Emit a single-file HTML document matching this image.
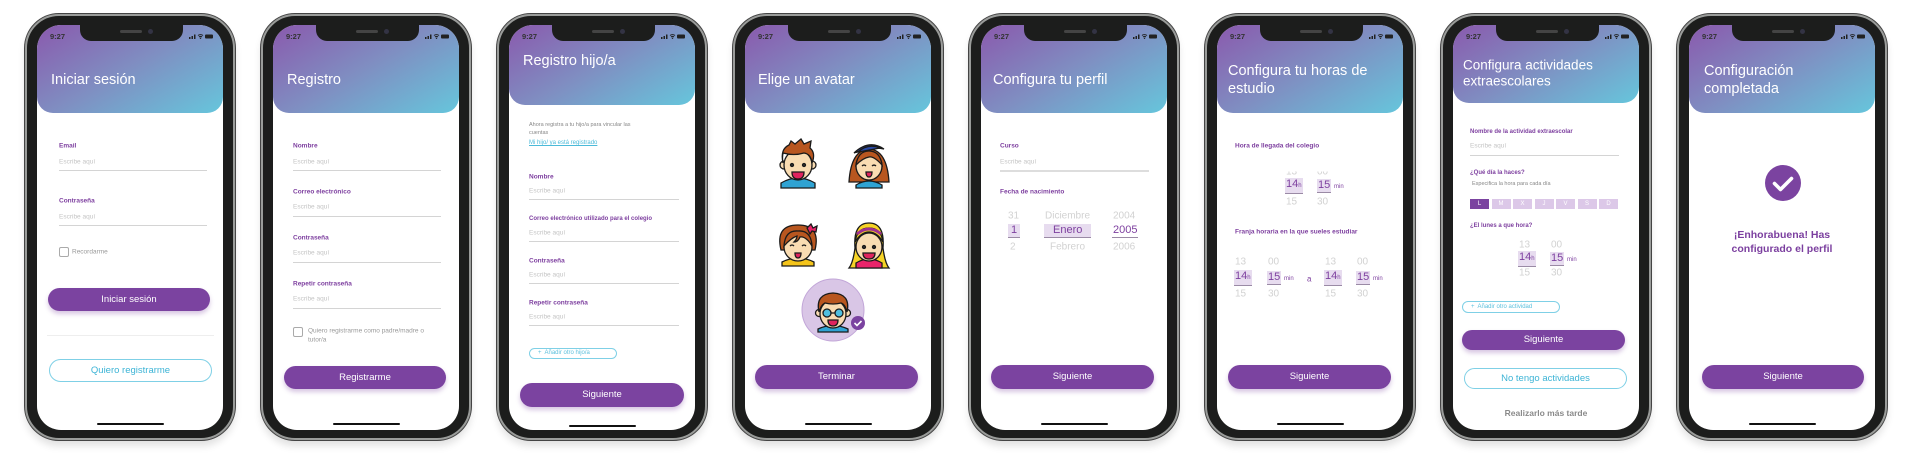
<!DOCTYPE html>
<html><head><meta charset="utf-8">
<style>
*{margin:0;padding:0;box-sizing:border-box}
body{width:1911px;height:464px;background:#fff;position:relative;overflow:hidden;font-family:"Liberation Sans",sans-serif}
.ph{position:absolute;top:0;width:222px;height:464px}
.fr{position:absolute;left:5px;top:14px;width:210px;height:426px;border-radius:34px;background:#1c1d1c;border:2px solid #9a9c9a;box-shadow:0 0 0 1px #444,0 6px 8px rgba(0,0,0,.12)}
.btn-s{position:absolute;width:3px;background:#555;left:2px}
.sc{position:absolute;left:17px;top:25px;width:186px;height:405px;border-radius:24px;background:#fff;overflow:hidden}
.hd{position:absolute;left:0;top:0;width:186px;height:88px;border-radius:0 0 16px 16px;background:linear-gradient(150deg,#8a59ad 0%,#7f8fc2 50%,#66c6dc 100%)}
.notch{position:absolute;left:43px;top:0;width:103px;height:16px;background:#1c1d1c;border-radius:0 0 11px 11px}
.notch:before{content:"";position:absolute;left:40px;top:5px;width:22px;height:3px;border-radius:2px;background:#444}
.notch:after{content:"";position:absolute;left:68px;top:4px;width:5px;height:5px;border-radius:50%;background:#334}
.tm{position:absolute;left:13px;top:7px;font-size:7.5px;font-weight:bold;color:#333}
.st{position:absolute;right:10px;top:8px;width:24px;height:6px}
.t{position:absolute;transform:translateY(-50%);white-space:nowrap}
.ttl{color:#fff;font-size:14.5px;left:14px}
.lb{font-size:6.5px;color:#7d3f9f;font-weight:bold}
.pl{font-size:6.5px;color:#c4c4c4}
.ln{position:absolute;height:1px;background:#d4d4d4}
.bt{position:absolute;height:23px;border-radius:12px;background:#7b43a0;color:#fff;font-size:9.5px;text-align:center;line-height:23px;box-shadow:0 3px 5px rgba(123,67,160,.3)}
.ob{position:absolute;height:23px;border-radius:12px;border:1px solid #7fd0e6;color:#3db4d6;font-size:9.5px;text-align:center;line-height:21px}
.hm{position:absolute;left:60px;top:398px;width:67px;height:2px;background:#111;border-radius:1px}
.cb{position:absolute;width:10px;height:10px;border:1px solid #aaa;border-radius:2px}
.gy{font-size:6.5px;color:#999}
.pk{font-size:10px;color:#d2d2d2}
.pks{font-size:11px;color:#7d3f9f;background:#e7dcef;border-bottom:1.5px solid #9a8aa5;padding:0 1px;line-height:13px}
.mn{font-size:6px;color:#7d3f9f}
.pill{position:absolute;height:11px;border:1px solid #7fd0e6;border-radius:6px;color:#5cc0dd;font-size:6px;line-height:9px;padding-left:8px}
.day{position:absolute;top:174px;width:19px;height:10px;background:#dcc8e8;color:#fff;font-size:6px;text-align:center;line-height:10px}
</style></head><body>

<!-- template repeated -->
<!-- PHONE 1 -->
<div class="ph" style="left:20px">
<div class="fr"></div>
<div class="sc">
 <div class="hd"></div><div class="notch"></div><div class="tm">9:27</div>
 <svg class="st" viewBox="0 0 24 6"><rect x="0" y="4" width="1.5" height="2" fill="#222"/><rect x="2.5" y="3" width="1.5" height="3" fill="#222"/><rect x="5" y="1.5" width="1.5" height="4.5" fill="#222"/><path d="M9 2.5a4 4 0 0 1 5 0M10 4a2.5 2.5 0 0 1 3 0" stroke="#222" stroke-width="1" fill="none"/><circle cx="11.5" cy="5.3" r=".7" fill="#222"/><rect x="16" y="1.5" width="8" height="4" rx="1" fill="#222"/></svg>
 <div class="t ttl" style="top:55px">Iniciar sesión</div>
 <div class="t lb" style="left:22px;top:121px">Email</div>
 <div class="t pl" style="left:22px;top:137px">Escribe aquí</div>
 <div class="ln" style="left:22px;top:145px;width:148px"></div>
 <div class="t lb" style="left:22px;top:176px">Contraseña</div>
 <div class="t pl" style="left:22px;top:192px">Escribe aquí</div>
 <div class="ln" style="left:22px;top:200px;width:148px"></div>
 <div class="cb" style="left:22px;top:222px"></div>
 <div class="t gy" style="left:35px;top:227px">Recordarme</div>
 <div class="bt" style="left:11px;top:263px;width:162px">Iniciar sesión</div>
 <div class="ln" style="left:10px;top:310px;width:167px;background:#eee"></div>
 <div class="ob" style="left:12px;top:334px;width:163px">Quiero registrarme</div>
 <div class="hm"></div>
</div></div>

<!-- PHONE 2 -->
<div class="ph" style="left:256px">
<div class="fr"></div>
<div class="sc">
 <div class="hd"></div><div class="notch"></div><div class="tm">9:27</div>
 <svg class="st" viewBox="0 0 24 6"><rect x="0" y="4" width="1.5" height="2" fill="#222"/><rect x="2.5" y="3" width="1.5" height="3" fill="#222"/><rect x="5" y="1.5" width="1.5" height="4.5" fill="#222"/><path d="M9 2.5a4 4 0 0 1 5 0M10 4a2.5 2.5 0 0 1 3 0" stroke="#222" stroke-width="1" fill="none"/><circle cx="11.5" cy="5.3" r=".7" fill="#222"/><rect x="16" y="1.5" width="8" height="4" rx="1" fill="#222"/></svg>
 <div class="t ttl" style="top:55px">Registro</div>
 <div class="t lb" style="left:20px;top:121px">Nombre</div>
 <div class="t pl" style="left:20px;top:137px">Escribe aquí</div>
 <div class="ln" style="left:20px;top:145px;width:148px"></div>
 <div class="t lb" style="left:20px;top:167px">Correo electrónico</div>
 <div class="t pl" style="left:20px;top:182px">Escribe aquí</div>
 <div class="ln" style="left:20px;top:191px;width:148px"></div>
 <div class="t lb" style="left:20px;top:213px">Contraseña</div>
 <div class="t pl" style="left:20px;top:228px">Escribe aquí</div>
 <div class="ln" style="left:20px;top:237px;width:148px"></div>
 <div class="t lb" style="left:20px;top:259px">Repetir contraseña</div>
 <div class="t pl" style="left:20px;top:274px">Escribe aquí</div>
 <div class="ln" style="left:20px;top:283px;width:148px"></div>
 <div class="cb" style="left:20px;top:302px"></div>
 <div class="t gy" style="left:35px;top:306px">Quiero registrarme como padre/madre o</div>
 <div class="t gy" style="left:35px;top:315px">tutor/a</div>
 <div class="bt" style="left:11px;top:341px;width:162px">Registrarme</div>
 <div class="hm"></div>
</div></div>

<!-- PHONE 3 -->
<div class="ph" style="left:492px">
<div class="fr"></div>
<div class="sc">
 <div class="hd" style="height:80px"></div><div class="notch"></div><div class="tm">9:27</div>
 <svg class="st" viewBox="0 0 24 6"><rect x="0" y="4" width="1.5" height="2" fill="#222"/><rect x="2.5" y="3" width="1.5" height="3" fill="#222"/><rect x="5" y="1.5" width="1.5" height="4.5" fill="#222"/><path d="M9 2.5a4 4 0 0 1 5 0M10 4a2.5 2.5 0 0 1 3 0" stroke="#222" stroke-width="1" fill="none"/><circle cx="11.5" cy="5.3" r=".7" fill="#222"/><rect x="16" y="1.5" width="8" height="4" rx="1" fill="#222"/></svg>
 <div class="t ttl" style="top:36px">Registro hijo/a</div>
 <div class="t" style="left:20px;top:100px;font-size:5.5px;color:#888">Ahora registra a tu hijo/a para vincular las</div>
 <div class="t" style="left:20px;top:108px;font-size:5.5px;color:#888">cuentas</div>
 <div class="t" style="left:20px;top:118px;font-size:6px;color:#4bbad9;text-decoration:underline">Mi hijo/ ya está registrado</div>
 <div class="t lb" style="left:20px;top:152px">Nombre</div>
 <div class="t pl" style="left:20px;top:166px">Escribe aquí</div>
 <div class="ln" style="left:20px;top:174px;width:150px"></div>
 <div class="t lb" style="left:20px;top:194px;font-size:6px">Correo electrónico utilizado para el colegio</div>
 <div class="t pl" style="left:20px;top:208px">Escribe aquí</div>
 <div class="ln" style="left:20px;top:216px;width:150px"></div>
 <div class="t lb" style="left:20px;top:236px">Contraseña</div>
 <div class="t pl" style="left:20px;top:250px">Escribe aquí</div>
 <div class="ln" style="left:20px;top:258px;width:150px"></div>
 <div class="t lb" style="left:20px;top:278px">Repetir contraseña</div>
 <div class="t pl" style="left:20px;top:292px">Escribe aquí</div>
 <div class="ln" style="left:20px;top:300px;width:150px"></div>
 <div class="pill" style="left:20px;top:323px;width:88px">+&nbsp; Añadir otro hijo/a</div>
 <div class="bt" style="left:11px;top:358px;width:164px;height:24px;line-height:24px">Siguiente</div>
 <div class="hm" style="top:400px"></div>
</div></div>

<!-- PHONE 4 -->
<div class="ph" style="left:728px">
<div class="fr"></div>
<div class="sc">
 <div class="hd"></div><div class="notch"></div><div class="tm">9:27</div>
 <svg class="st" viewBox="0 0 24 6"><rect x="0" y="4" width="1.5" height="2" fill="#222"/><rect x="2.5" y="3" width="1.5" height="3" fill="#222"/><rect x="5" y="1.5" width="1.5" height="4.5" fill="#222"/><path d="M9 2.5a4 4 0 0 1 5 0M10 4a2.5 2.5 0 0 1 3 0" stroke="#222" stroke-width="1" fill="none"/><circle cx="11.5" cy="5.3" r=".7" fill="#222"/><rect x="16" y="1.5" width="8" height="4" rx="1" fill="#222"/></svg>
 <div class="t ttl" style="top:55px;left:13px">Elige un avatar</div>
 <svg style="position:absolute;left:0;top:100px" width="186" height="230" viewBox="0 100 186 230">
  <g stroke="#1a1a1a" stroke-width="1.3">
  <!-- boy 1 -->
  <path d="M36 158 q17-10 34 0 v5 h-34z" fill="#2fa3d3"/>
  <circle cx="39" cy="140" r="4" fill="#f9dcb2"/><circle cx="67" cy="140" r="4" fill="#f9dcb2"/>
  <ellipse cx="53" cy="140" rx="14" ry="15" fill="#f9dcb2"/>
  <path d="M38 138 q-3-14 6-18 l2-4 4 3 6-5 3 5 7-3 -1 7 q6 5 2 15 q-1-9-8-10 q-10 3-21 0 q-1 5 0 10z" fill="#b8561f"/>
  <circle cx="47" cy="140" r="1.5" fill="#333"/><circle cx="59" cy="140" r="1.5" fill="#333"/>
  <path d="M47 147 h12 q0 7-6 7 q-6 0-6-7z" fill="#e0245e"/>
  <!-- girl beret -->
  <path d="M104 157 q2-32 20-33 q18 1 20 33z" fill="#b8561f"/>
  <path d="M111 160 q13-8 26 0 v3 h-26z" fill="#2fa3d3"/>
  <ellipse cx="124" cy="141" rx="13" ry="14" fill="#f9dcb2"/>
  <path d="M111 140 q2-14 13-14 q11 0 13 14 q-8-9-13-8 q-6 1-13 8z" fill="#b8561f"/>
  <path d="M109 128 q15-14 30-4 q-12-3-30 4z" fill="#2a4aa6"/>
  <path d="M113 127 q10-9 22-4 q-10 2-22 4z" fill="#2a4aa6"/>
  <path d="M117 141 q2-2 4 0M127 141 q2-2 4 0" fill="none"/>
  <path d="M121 147 h6 q0 5-3 5 q-3 0-3-5z" fill="#e0245e"/>
  <!-- girl bow -->
  <path d="M37 237 q16-8 32 0 v4 h-32z" fill="#f4c41a"/>
  <path d="M36 225 q-6-25 17-25 q23 0 17 25z" fill="#b8561f"/>
  <ellipse cx="53" cy="222" rx="14" ry="14" fill="#f9dcb2"/>
  <path d="M39 221 q1-16 14-15 q13-1 14 15 q-6-10-12-9 q-2 5-6 5 q3-3 3-6 q-6 2-13 10z" fill="#b8561f"/>
  <path d="M62 203 l4-4 2 4 4-2 -1 6 -4-1 -2 3z" fill="#e8246a"/>
  <path d="M45 221 q2-2 4 0M57 221 q2-2 4 0" fill="none"/>
  <path d="M50 228 h6 q0 5-3 5 q-3 0-3-5z" fill="#e0245e"/>
  <!-- blonde girl -->
  <path d="M104 243 q4-5 6-20 q-2-25 14-25 q16 0 14 25 q2 15 6 20z" fill="#f6d326" />
  <path d="M111 238 q13-8 26 0 v5 h-26z" fill="#e8246a"/>
  <ellipse cx="124" cy="222" rx="13" ry="14" fill="#f9dcb2"/>
  <path d="M110 217 q2-14 14-14 q12 0 14 14 q-6-10-14-10 q-8 0-14 10z" fill="#f6d326"/>
  <path d="M112 209 q12-10 24 0" fill="none" stroke="#a03090" stroke-width="3"/>
  <circle cx="119" cy="222" r="1.5" fill="#333"/><circle cx="129" cy="222" r="1.5" fill="#333"/>
  <path d="M118 228 h12 q0 6-6 6 q-6 0-6-6z" fill="#e0245e"/>
  </g>
  <!-- selected -->
  <circle cx="88" cy="285" r="31" fill="#d9c6e6" stroke="#c2a6d8" stroke-width="1"/>
  <g stroke="#1a1a1a" stroke-width="1.3">
  <path d="M73 304 q15-7 30 0 v3 h-30z" fill="#2fa3d3"/>
  <circle cx="74" cy="288" r="3.5" fill="#f9dcb2"/><circle cx="102" cy="288" r="3.5" fill="#f9dcb2"/>
  <ellipse cx="88" cy="289" rx="13" ry="14" fill="#f9dcb2"/>
  <path d="M74 287 q-4-18 14-19 q18 1 14 19 q-2-8-6-9 q-8 2-16 0 q-4 2-6 9z" fill="#b8561f"/>
  <circle cx="82" cy="288" r="4" fill="#4fc0e0"/><circle cx="94" cy="288" r="4" fill="#4fc0e0"/>
  <path d="M86 288 h4"/>
  <path d="M83 295 h10 q0 6-5 6 q-5 0-5-6z" fill="#e0245e"/>
  </g>
  <circle cx="113" cy="298" r="7" fill="#7b43a0"/>
  <path d="M109.5 298 l2.5 2.5 4.5-4.5" stroke="#fff" stroke-width="1.6" fill="none"/>
 </svg>
 <div class="bt" style="left:10px;top:340px;width:163px;height:24px;line-height:24px">Terminar</div>
 <div class="hm"></div>
</div></div>

<!-- PHONE 5 -->
<div class="ph" style="left:964px">
<div class="fr"></div>
<div class="sc">
 <div class="hd"></div><div class="notch"></div><div class="tm">9:27</div>
 <svg class="st" viewBox="0 0 24 6"><rect x="0" y="4" width="1.5" height="2" fill="#222"/><rect x="2.5" y="3" width="1.5" height="3" fill="#222"/><rect x="5" y="1.5" width="1.5" height="4.5" fill="#222"/><path d="M9 2.5a4 4 0 0 1 5 0M10 4a2.5 2.5 0 0 1 3 0" stroke="#222" stroke-width="1" fill="none"/><circle cx="11.5" cy="5.3" r=".7" fill="#222"/><rect x="16" y="1.5" width="8" height="4" rx="1" fill="#222"/></svg>
 <div class="t ttl" style="top:55px;left:12px">Configura tu perfil</div>
 <div class="t lb" style="left:19px;top:121px">Curso</div>
 <div class="t pl" style="left:19px;top:137px">Escribe aquí</div>
 <div class="ln" style="left:19px;top:145px;width:149px;height:1.5px;background:#ddd"></div>
 <div class="t lb" style="left:19px;top:167px">Fecha de nacimiento</div>
 <div class="t pk" style="left:27px;top:191px">31</div>
 <div class="t pk" style="left:64px;top:191px">Diciembre</div>
 <div class="t pk" style="left:132px;top:191px">2004</div>
 <div class="t pks" style="left:27px;top:206px;padding:0 3px">1</div>
 <div class="t pks" style="left:63px;top:206px;padding:0 9px">Enero</div>
 <div class="t pks" style="left:131px;top:206px;background:none">2005</div>
 <div class="t pk" style="left:29px;top:222px">2</div>
 <div class="t pk" style="left:69px;top:222px">Febrero</div>
 <div class="t pk" style="left:132px;top:222px">2006</div>
 <div class="bt" style="left:10px;top:340px;width:163px;height:24px;line-height:24px">Siguiente</div>
 <div class="hm"></div>
</div></div>

<!-- PHONE 6 -->
<div class="ph" style="left:1200px">
<div class="fr"></div>
<div class="sc">
 <div class="hd"></div><div class="notch"></div><div class="tm">9:27</div>
 <svg class="st" viewBox="0 0 24 6"><rect x="0" y="4" width="1.5" height="2" fill="#222"/><rect x="2.5" y="3" width="1.5" height="3" fill="#222"/><rect x="5" y="1.5" width="1.5" height="4.5" fill="#222"/><path d="M9 2.5a4 4 0 0 1 5 0M10 4a2.5 2.5 0 0 1 3 0" stroke="#222" stroke-width="1" fill="none"/><circle cx="11.5" cy="5.3" r=".7" fill="#222"/><rect x="16" y="1.5" width="8" height="4" rx="1" fill="#222"/></svg>
 <div class="t ttl" style="top:46px;left:11px">Configura tu horas de</div>
 <div class="t ttl" style="top:64px;left:11px">estudio</div>
 <div class="t lb" style="left:18px;top:121px">Hora de llegada del colegio</div>
 <div class="t pk" style="left:69px;top:147px;clip-path:inset(45% 0 0 0)">13</div>
 <div class="t pk" style="left:100px;top:147px;clip-path:inset(45% 0 0 0)">00</div>
 <div class="t pks" style="left:68px;top:161px">14<span class="mn">h</span></div>
 <div class="t pks" style="left:100px;top:161px">15</div><div class="t mn" style="left:117px;top:162px">min</div>
 <div class="t pk" style="left:69px;top:177px">15</div>
 <div class="t pk" style="left:100px;top:177px">30</div>
 <div class="t lb" style="left:18px;top:207px">Franja horaria en la que sueles estudiar</div>
 <div class="t pk" style="left:18px;top:237px">13</div><div class="t pk" style="left:51px;top:237px">00</div>
 <div class="t pk" style="left:108px;top:237px">13</div><div class="t pk" style="left:140px;top:237px">00</div>
 <div class="t pks" style="left:17px;top:253px">14<span class="mn">h</span></div>
 <div class="t pks" style="left:50px;top:253px">15</div><div class="t mn" style="left:67px;top:254px">min</div>
 <div class="t" style="left:90px;top:254px;font-size:8px;color:#7d3f9f">a</div>
 <div class="t pks" style="left:107px;top:253px">14<span class="mn">h</span></div>
 <div class="t pks" style="left:139px;top:253px">15</div><div class="t mn" style="left:156px;top:254px">min</div>
 <div class="t pk" style="left:18px;top:269px">15</div><div class="t pk" style="left:51px;top:269px">30</div>
 <div class="t pk" style="left:108px;top:269px">15</div><div class="t pk" style="left:140px;top:269px">30</div>
 <div class="bt" style="left:11px;top:340px;width:163px;height:24px;line-height:24px">Siguiente</div>
 <div class="hm"></div>
</div></div>

<!-- PHONE 7 -->
<div class="ph" style="left:1436px">
<div class="fr"></div>
<div class="sc">
 <div class="hd" style="height:78px"></div><div class="notch"></div><div class="tm">9:27</div>
 <svg class="st" viewBox="0 0 24 6"><rect x="0" y="4" width="1.5" height="2" fill="#222"/><rect x="2.5" y="3" width="1.5" height="3" fill="#222"/><rect x="5" y="1.5" width="1.5" height="4.5" fill="#222"/><path d="M9 2.5a4 4 0 0 1 5 0M10 4a2.5 2.5 0 0 1 3 0" stroke="#222" stroke-width="1" fill="none"/><circle cx="11.5" cy="5.3" r=".7" fill="#222"/><rect x="16" y="1.5" width="8" height="4" rx="1" fill="#222"/></svg>
 <div class="t ttl" style="top:40px;left:10px;font-size:13.5px">Configura actividades</div>
 <div class="t ttl" style="top:56px;left:10px;font-size:13.5px">extraescolares</div>
 <div class="t lb" style="left:17px;top:107px;font-size:6px">Nombre de la actividad extraescolar</div>
 <div class="t pl" style="left:17px;top:121px">Escribe aquí</div>
 <div class="ln" style="left:17px;top:130px;width:149px"></div>
 <div class="t lb" style="left:17px;top:148px;font-size:6px">¿Qué día la haces?</div>
 <div class="t" style="left:19px;top:159px;font-size:5.5px;color:#888">Especifica la hora para cada día</div>
 <div class="day" style="left:17px;background:#7b43a0">L</div>
 <div class="day" style="left:38.5px">M</div>
 <div class="day" style="left:60px">X</div>
 <div class="day" style="left:81.5px">J</div>
 <div class="day" style="left:103px">V</div>
 <div class="day" style="left:124.5px">S</div>
 <div class="day" style="left:146px">D</div>
 <div class="t lb" style="left:17px;top:201px;font-size:6px">¿El lunes a que hora?</div>
 <div class="t pk" style="left:66px;top:220px">13</div><div class="t pk" style="left:98px;top:220px">00</div>
 <div class="t pks" style="left:65px;top:234px">14<span class="mn">h</span></div>
 <div class="t pks" style="left:97px;top:234px">15</div><div class="t mn" style="left:114px;top:235px">min</div>
 <div class="t pk" style="left:66px;top:248px">15</div><div class="t pk" style="left:98px;top:248px">30</div>
 <div class="pill" style="left:9px;top:276px;width:98px;height:12px;line-height:10px">+&nbsp; Añadir otro actividad</div>
 <div class="bt" style="left:9px;top:305px;width:163px;height:20px;line-height:20px">Siguiente</div>
 <div class="ob" style="left:11px;top:343px;width:163px;height:21px;line-height:19px">No tengo actividades</div>
 <div class="t" style="left:0;width:186px;text-align:center;top:388px;font-size:8.5px;color:#8a8a8a;font-weight:bold">Realizarlo más tarde</div>
</div></div>

<!-- PHONE 8 -->
<div class="ph" style="left:1672px">
<div class="fr"></div>
<div class="sc">
 <div class="hd"></div><div class="notch"></div><div class="tm">9:27</div>
 <svg class="st" viewBox="0 0 24 6"><rect x="0" y="4" width="1.5" height="2" fill="#222"/><rect x="2.5" y="3" width="1.5" height="3" fill="#222"/><rect x="5" y="1.5" width="1.5" height="4.5" fill="#222"/><path d="M9 2.5a4 4 0 0 1 5 0M10 4a2.5 2.5 0 0 1 3 0" stroke="#222" stroke-width="1" fill="none"/><circle cx="11.5" cy="5.3" r=".7" fill="#222"/><rect x="16" y="1.5" width="8" height="4" rx="1" fill="#222"/></svg>
 <div class="t ttl" style="top:46px;left:15px">Configuración</div>
 <div class="t ttl" style="top:64px;left:15px">completada</div>
 <svg style="position:absolute;left:76px;top:140px" width="36" height="36" viewBox="0 0 36 36"><circle cx="18" cy="18" r="18" fill="#7b43a0"/><path d="M9.5 18.5 l6 6 l11-11" stroke="#fff" stroke-width="3.6" fill="none" stroke-linecap="round" stroke-linejoin="round"/></svg>
 <div class="t" style="left:0;width:186px;text-align:center;top:210px;font-size:10.5px;font-weight:bold;color:#7b3f9f">¡Enhorabuena! Has</div>
 <div class="t" style="left:0;width:186px;text-align:center;top:224px;font-size:10.5px;font-weight:bold;color:#7b3f9f">configurado el perfil</div>
 <div class="bt" style="left:13px;top:340px;width:162px;height:24px;line-height:24px">Siguiente</div>
 <div class="hm"></div>
</div></div>

</body></html>
